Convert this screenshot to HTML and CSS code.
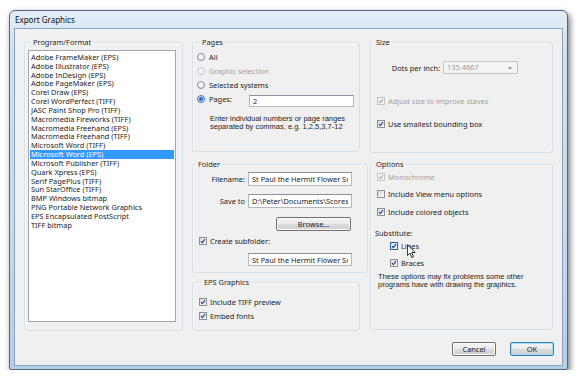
FILE: index.html
```html
<!DOCTYPE html>
<html lang="en">
<head>
    <meta charset="UTF-8">
    <title>Export Graphics</title>
    <link rel="stylesheet" href="styles.css">
</head>
<body>
    <div class="window">
        <div class="titlebar">Export Graphics</div>
        <div class="client">
            <div class="panes">
                <!-- left column: list of formats -->
                <fieldset class="group program">
                    <legend>Program/Format</legend>
                    <ul class="listbox">
                        <li>Adobe FrameMaker (EPS)</li>
                        <li>Adobe Illustrator (EPS)</li>
                        <li>Adobe InDesign (EPS)</li>
                        <li>Adobe PageMaker (EPS)</li>
                        <li>Corel Draw (EPS)</li>
                        <li>Corel WordPerfect (TIFF)</li>
                        <li>JASC Paint Shop Pro (TIFF)</li>
                        <li>Macromedia Fireworks (TIFF)</li>
                        <li>Macromedia Freehand (EPS)</li>
                        <li>Macromedia Freehand (TIFF)</li>
                        <li>Microsoft Word (TIFF)</li>
                        <li class="selected">Microsoft Word (EPS)</li>
                        <li>Microsoft Publisher (TIFF)</li>
                        <li>Quark Xpress (EPS)</li>
                        <li>Serif PagePlus (TIFF)</li>
                        <li>Sun StarOffice (TIFF)</li>
                        <li>BMP Windows bitmap</li>
                        <li>PNG Portable Network Graphics</li>
                        <li>EPS Encapsulated PostScript</li>
                        <li>TIFF bitmap</li>
                    </ul>
                </fieldset>

                <!-- middle column -->
                <div class="column middle">
                    <fieldset class="group pages">
                        <legend>Pages</legend>
                        <div class="row"><span class="radio"></span>All</div>
                        <div class="row disabled"><span class="radio"></span>Graphic selection</div>
                        <div class="row"><span class="radio"></span>Selected systems</div>
                        <div class="row"><span class="radio checked"></span><span class="pages-label">Pages:</span><input class="textbox pages-box" type="text" value="2"></div>
                        <div class="hint">
                            <span>Enter individual numbers or page ranges</span>
                            <span>separated by commas, e.g. 1,2,5,3,7-12</span>
                        </div>
                    </fieldset>

                    <fieldset class="group folder">
                        <legend>Folder</legend>
                        <div class="field"><span class="field-label">Filename:</span><input class="textbox" type="text" value="St Paul the Hermit Flower Song"></div>
                        <div class="field saveto"><span class="field-label">Save to</span><input class="textbox" type="text" value="D:\Peter\Documents\Scores"></div>
                        <button class="btn browse">Browse...</button>
                        <div class="row subfolder"><span class="check"><svg viewBox="0 0 7 7"><path d="M1.2 3.6 L2.8 5.3 L5.9 1.3"/></svg></span>Create subfolder:</div>
                        <input class="textbox subfolder-box" type="text" value="St Paul the Hermit Flower Song">
                    </fieldset>

                    <fieldset class="group eps">
                        <legend>EPS Graphics</legend>
                        <div class="row"><span class="check"><svg viewBox="0 0 7 7"><path d="M1.2 3.6 L2.8 5.3 L5.9 1.3"/></svg></span>Include TIFF preview</div>
                        <div class="row"><span class="check"><svg viewBox="0 0 7 7"><path d="M1.2 3.6 L2.8 5.3 L5.9 1.3"/></svg></span>Embed fonts</div>
                    </fieldset>
                </div>

                <!-- right column -->
                <div class="column right">
                    <fieldset class="group size">
                        <legend>Size</legend>
                        <div class="field dpi"><span class="field-label">Dots per inch:</span><span class="combo">135.4667<span class="arrow"></span></span></div>
                        <div class="row disabled adjust"><span class="check"><svg viewBox="0 0 7 7"><path d="M1.2 3.6 L2.8 5.3 L5.9 1.3"/></svg></span>Adjust size to improve staves</div>
                        <div class="row smallest"><span class="check"><svg viewBox="0 0 7 7"><path d="M1.2 3.6 L2.8 5.3 L5.9 1.3"/></svg></span>Use smallest bounding box</div>
                    </fieldset>

                    <fieldset class="group options">
                        <legend>Options</legend>
                        <div class="row disabled mono"><span class="check"><svg viewBox="0 0 7 7"><path d="M1.2 3.6 L2.8 5.3 L5.9 1.3"/></svg></span>Monochrome</div>
                        <div class="row viewmenu"><span class="check"></span>Include View menu options</div>
                        <div class="row colored"><span class="check"><svg viewBox="0 0 7 7"><path d="M1.2 3.6 L2.8 5.3 L5.9 1.3"/></svg></span>Include colored objects</div>
                        <div class="substitute">Substitute:</div>
                        <div class="row sub lines"><span class="check hot"><svg viewBox="0 0 7 7"><path d="M1.2 3.6 L2.8 5.3 L5.9 1.3"/></svg></span>Lines
                            <svg class="cursor" viewBox="0 0 10 16"><path d="M0.5 0.5 L0.5 12.5 L3.3 9.8 L5.3 14.6 L7.2 13.8 L5.3 9.2 L9 9.2 Z"/></svg>
                        </div>
                        <div class="row sub braces"><span class="check"><svg viewBox="0 0 7 7"><path d="M1.2 3.6 L2.8 5.3 L5.9 1.3"/></svg></span>Braces</div>
                        <div class="hint options-hint">
                            <span>These options may fix problems some other</span>
                            <span>programs have with drawing the graphics.</span>
                        </div>
                    </fieldset>
                </div>
            </div>

            <div class="buttons">
                <button class="btn">Cancel</button>
                <button class="btn default">OK</button>
            </div>
        </div>
    </div>
</body>
</html>
```

FILE: styles.css
```css
* {
    box-sizing: border-box;
}

body {
    margin: 0;
    background: #ffffff;
    font-family: "Noto Sans", "DejaVu Sans", sans-serif;
    font-size: 7.4px;
    color: #1c1c1c;
}

/* window frame */
.window {
    margin: 10px 0 0 9px;
    width: 559px;
    height: 360px;
    border: 1px solid #56667a;
    border-radius: 6px 6px 2px 2px;
    background: linear-gradient(#e4eef8, #d0e1f2 10%, #c6dbef 60%, #b2cfea);
    box-shadow: 2px 3px 6px rgba(0, 0, 0, 0.55);
    display: flex;
    flex-direction: column;
}

.titlebar {
    height: 17px;
    line-height: 17px;
    padding-left: 5px;
    font-size: 8px;
    color: #0c0c0c;
}

.client {
    margin: 0 4px;
    height: 338px;
    border: 1px solid #8fa3b8;
    background: #f0f0f0;
    padding: 8px 8px 0 9px;
}

.panes {
    display: flex;
    height: 294px;
}

.column {
    display: flex;
    flex-direction: column;
}

.middle {
    margin-left: 9px;
    width: 176px;
}

.right {
    margin-left: 2px;
    width: 183px;
}

/* group boxes */
.group {
    margin: 0;
    padding: 0;
    min-width: 0;
    border: 1px solid #d5dfe5;
    border-radius: 3px;
    box-shadow: inset 1px 1px 0 #fbfbfb;
}

.group legend {
    padding: 0 2px;
    margin-left: 3px;
    line-height: 10px;
}

.program {
    width: 159px;
    height: 294px;
    padding: 0 6px 0 3px;
}

.pages {
    width: 168px;
    height: 115px;
    padding: 3px 0 0 4px;
}

.folder {
    width: 176px;
    height: 114px;
    margin-top: 7px;
}

.eps {
    width: 168px;
    height: 54px;
    margin-top: 4px;
    padding: 8px 0 0 6px;
}

.size {
    height: 116px;
}

.options {
    height: 171px;
    margin-top: 6px;
}

/* list box */
.listbox {
    list-style: none;
    margin: 3px 0 0 0;
    padding: 2px 1px 0 1px;
    height: 272px;
    background: #fff;
    border: 1px solid #a3a6ad;
    overflow: hidden;
}

.listbox li {
    height: 8.84px;
    line-height: 8.84px;
    padding-left: 1px;
    white-space: nowrap;
}

.listbox li.selected {
    background: #3399ff;
    color: #fff;
}

/* rows with a radio or check */
.row {
    display: flex;
    align-items: center;
    height: 14px;
    white-space: nowrap;
}

.disabled {
    color: #a2a2a2;
}

.radio {
    width: 8px;
    height: 8px;
    border-radius: 50%;
    border: 1px solid #8c8c8c;
    background: radial-gradient(circle at 40% 35%, #ffffff, #dcdcdc);
    margin-right: 4px;
    flex: none;
}

.radio.checked {
    border-color: #4a76a6;
    background: radial-gradient(circle, #1f5fbf 0, #3f83d8 1.6px, #a9c9ee 2.4px, #f2f2f2 3px);
}

.disabled .radio {
    border-color: #c9c9c9;
    background: #f3f3f3;
}

.check {
    width: 8px;
    height: 8px;
    border: 1px solid #8e8f8f;
    background: linear-gradient(135deg, #d9d9d9, #fbfbfb);
    margin-right: 3px;
    flex: none;
    display: flex;
    align-items: center;
    justify-content: center;
}

.check svg {
    width: 6px;
    height: 6px;
    fill: none;
    stroke: #1f3f96;
    stroke-width: 1.3;
}

.disabled .check {
    border-color: #c3c3c3;
    background: #f4f4f4;
}

.disabled .check svg {
    stroke: #a8a8a8;
}

.check.hot {
    border-color: #2c5fa0;
    background: linear-gradient(135deg, #c7e8fa, #f2fbff);
}

.pages-label {
    width: 40px;
}

.hint {
    margin: 9px 0 0 13px;
    white-space: nowrap;
    font-family: "Liberation Sans", Arial, sans-serif;
    font-size: 7.5px;
}

.hint span {
    display: block;
    height: 8.4px;
    line-height: 8.4px;
}

/* text boxes */
.textbox {
    height: 14px;
    width: 104px;
    padding: 0 3px;
    border: 1px solid #b5b8bf;
    border-top-color: #8d9098;
    background: #fff;
    font: inherit;
    color: inherit;
    outline: none;
}

.pages-box {
    width: 105px;
    height: 12px;
    margin-top: 3px;
}

.field {
    display: flex;
    align-items: center;
    margin-top: 3px;
}

.field-label {
    width: 52px;
    text-align: right;
    margin-right: 3px;
    white-space: nowrap;
}

.saveto {
    margin-top: 8px;
}

.subfolder {
    margin: 3px 0 0 6px;
}

.subfolder-box {
    display: block;
    margin: 5px 0 0 55px;
    height: 13px;
}

/* buttons */
.btn {
    display: block;
    width: 44px;
    height: 14px;
    padding: 0;
    border: 1px solid #707070;
    border-radius: 2px;
    background: linear-gradient(#f3f3f3, #ebebeb 50%, #dcdcdc 50%, #cfcfcf);
    font: inherit;
    color: #1c1c1c;
    box-shadow: inset 0 0 0 1px #fbfbfb;
}

.browse {
    width: 75px;
    margin: 9px 0 0 83px;
}

.btn.default {
    border-color: #3c7fb1;
    box-shadow: inset 0 0 0 1px #9fdcf7;
}

.buttons {
    display: flex;
    justify-content: flex-end;
    gap: 14px;
    margin-top: 11px;
}

/* size group */
.dpi {
    margin-top: 14px;
}

.dpi .field-label {
    width: 69px;
}

.combo {
    position: relative;
    width: 75px;
    height: 13px;
    line-height: 11px;
    padding-left: 3px;
    border: 1px solid #c5c5c5;
    background: #f4f4f4;
    color: #9a9a9a;
}

.combo .arrow {
    position: absolute;
    right: 5px;
    top: 5px;
    border-left: 2.5px solid transparent;
    border-right: 2.5px solid transparent;
    border-top: 3px solid #9c9c9c;
}

.adjust {
    margin: 20px 0 0 6px;
}

.smallest {
    margin: 9px 0 0 6px;
}

/* options group */
.mono {
    margin: 1px 0 0 6px;
}

.viewmenu {
    margin: 3px 0 0 6px;
}

.colored {
    margin: 4px 0 0 6px;
}

.substitute {
    margin: 9px 0 0 4px;
    line-height: 10px;
}

.sub {
    margin-left: 19px;
}

.lines {
    margin-top: 1px;
    position: relative;
}

.braces {
    margin-top: 3px;
}

.cursor {
    position: absolute;
    left: 17px;
    top: 5px;
    width: 9px;
    height: 15px;
    fill: #fff;
    stroke: #000;
    stroke-width: 0.9;
}

.options-hint {
    margin: 3px 0 0 7px;
}
```
